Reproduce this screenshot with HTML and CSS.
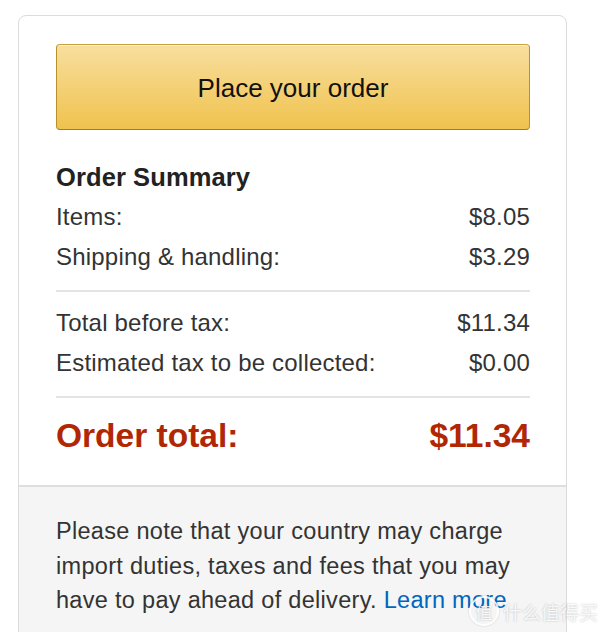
FILE: index.html
```html
<!DOCTYPE html>
<html>
<head>
<meta charset="utf-8">
<link rel="stylesheet" href="styles.css">
</head>
<body>
<div class="card">
  <div class="main">
    <button class="place">Place your order</button>
    <h3 class="title">Order Summary</h3>
    <div class="row"><span>Items:</span><span>$8.05</span></div>
    <div class="row"><span>Shipping &amp; handling:</span><span>$3.29</span></div>
    <hr class="sep">
    <div class="row"><span>Total before tax:</span><span>$11.34</span></div>
    <div class="row"><span>Estimated tax to be collected:</span><span>$0.00</span></div>
    <hr class="sep">
    <div class="row total"><span>Order total:</span><span>$11.34</span></div>
  </div>
  <div class="foot">
    <p class="note">Please note that your country may charge import duties, taxes and fees that you may have to pay ahead of delivery. <a class="link" href="#">Learn more</a></p>
  </div>
</div>
<div class="mark"><span class="mark-icon">值</span><span class="mark-text">什么值得买</span></div>
</body>
</html>
```
FILE: styles.css
```css
html, body {
  margin: 0;
  padding: 0;
  background: #fff;
  font-family: "Liberation Sans", Arial, sans-serif;
  color: #333;
  overflow: hidden;
}
.card {
  margin: 15px 0 0 18px;
  width: 547px;
  border: 1px solid #dcdcdc;
  border-radius: 8px 8px 0 0;
  height: 700px;
  box-sizing: content-box;
}
.main {
  padding: 28px 36px 29px 37px;
}
.place {
  display: block;
  width: 474px;
  height: 86px;
  margin: 0;
  padding: 3px 0 0;
  border: 1px solid;
  border-color: #c7a240 #b8912c #a27d1f;
  border-radius: 4px;
  background: linear-gradient(to bottom, #f8df9f, #f0c24e);
  box-shadow: inset 0 1px 0 rgba(255,255,255,0.5);
  font-family: "Liberation Sans", Arial, sans-serif;
  font-size: 26px;
  color: #111;
  cursor: pointer;
}
.title {
  margin: 27px 0 0;
  font-size: 25.5px;
  line-height: 40px;
  font-weight: bold;
  color: #222;
  letter-spacing: 0.1px;
}
.row {
  display: flex;
  justify-content: space-between;
  font-size: 24px;
  line-height: 40px;
  letter-spacing: 0.2px;
}
.sep {
  margin: 13px 0 11px;
  border: 0;
  border-top: 2px solid #e4e4e4;
  height: 0;
}
.total {
  margin-top: 18px;
  font-size: 33.5px;
  font-weight: bold;
  color: #b12704;
  letter-spacing: 0;
}
.foot {
  background: #f5f5f5;
  border-top: 2px solid #dedede;
  padding: 27px 36px 0 37px;
  height: 400px;
}
.note {
  margin: 0;
  font-size: 23.5px;
  line-height: 34.5px;
  letter-spacing: 0.3px;
  color: #333;
}
.link {
  color: #0066c0;
  text-decoration: none;
}
.mark {
  position: absolute;
  right: 2px;
  top: 596px;
  display: flex;
  align-items: center;
  gap: 4px;
  color: rgba(255,255,255,0.85);
  text-shadow: 0 0 2px rgba(0,0,0,0.25);
  font-family: "Noto Sans CJK SC", sans-serif;
}
.mark-icon {
  width: 30px;
  height: 30px;
  border: 2px solid rgba(255,255,255,0.85);
  border-radius: 50%;
  box-shadow: 0 0 2px rgba(0,0,0,0.2);
  display: flex;
  align-items: center;
  justify-content: center;
  font-size: 17px;
  box-sizing: border-box;
}
.mark-text {
  font-size: 19px;
}
```
